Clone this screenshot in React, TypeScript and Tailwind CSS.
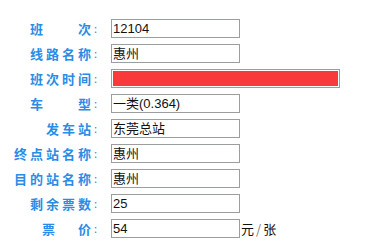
import React from "react";

const labelFont = { fontFamily: '"Noto Sans CJK SC", "Noto Sans", sans-serif' };

function Label({ chars, gap }: { chars: string[]; gap?: number }) {
  return (
    <div className="w-[111px] shrink-0 flex justify-end items-center pr-[7px] text-[13px] font-bold text-[#2b8ce6] leading-none" style={labelFont}>
      {chars.map((c, i) => (
        <React.Fragment key={i}>
          <span className="tracking-[3px]">{c}</span>
          {gap && i === 0 ? <span className={gap === 32 ? "w-[32px]" : "w-[20px]"} /> : null}
        </React.Fragment>
      ))}
      <span className="w-[10px] text-[11px] font-normal">:</span>
    </div>
  );
}

function Field({ value, red }: { value?: string; red?: boolean }) {
  if (red) {
    return (
      <div className="w-[229px] h-[19px] border border-[#9a9e9e] p-px bg-white">
        <div className="w-full h-full bg-[#f93a3a]" />
      </div>
    );
  }
  return (
    <div
      className="w-[129px] h-[19px] border border-[#9a9e9e] bg-white flex items-center pl-[1px] text-[13px] text-[#111] leading-none"
      style={{ fontFamily: '"Liberation Sans", "Noto Sans CJK SC", sans-serif' }}
    >
      {value}
    </div>
  );
}

export default function App() {
  const rows: { chars: string[]; gap?: number; value?: string; red?: boolean; suffix?: boolean }[] = [
    { chars: ["班", "次"], gap: 32, value: "12104" },
    { chars: ["线", "路", "名", "称"], value: "惠州" },
    { chars: ["班", "次", "时", "间"], red: true },
    { chars: ["车", "型"], gap: 32, value: "一类(0.364)" },
    { chars: ["发", "车", "站"], value: "东莞总站" },
    { chars: ["终", "点", "站", "名", "称"], value: "惠州" },
    { chars: ["目", "的", "站", "名", "称"], value: "惠州" },
    { chars: ["剩", "余", "票", "数"], value: "25" },
    { chars: ["票", "价"], gap: 20, value: "54", suffix: true },
  ];
  return (
    <div className="w-[379px] h-[243px] bg-white pt-[19px] flex flex-col gap-[6px]">
      {rows.map((r, i) => (
        <div key={i} className="flex items-center h-[19px]">
          <Label chars={r.chars} gap={r.gap} />
          <Field value={r.value} red={r.red} />
          {r.suffix && (
            <span className="text-[13px] text-[#111] pl-[1px] leading-none" style={{ fontFamily: '"Noto Sans CJK SC", sans-serif' }}>
              元<span className="text-[#777] px-[2px]">/</span>张
            </span>
          )}
        </div>
      ))}
    </div>
  );
}
